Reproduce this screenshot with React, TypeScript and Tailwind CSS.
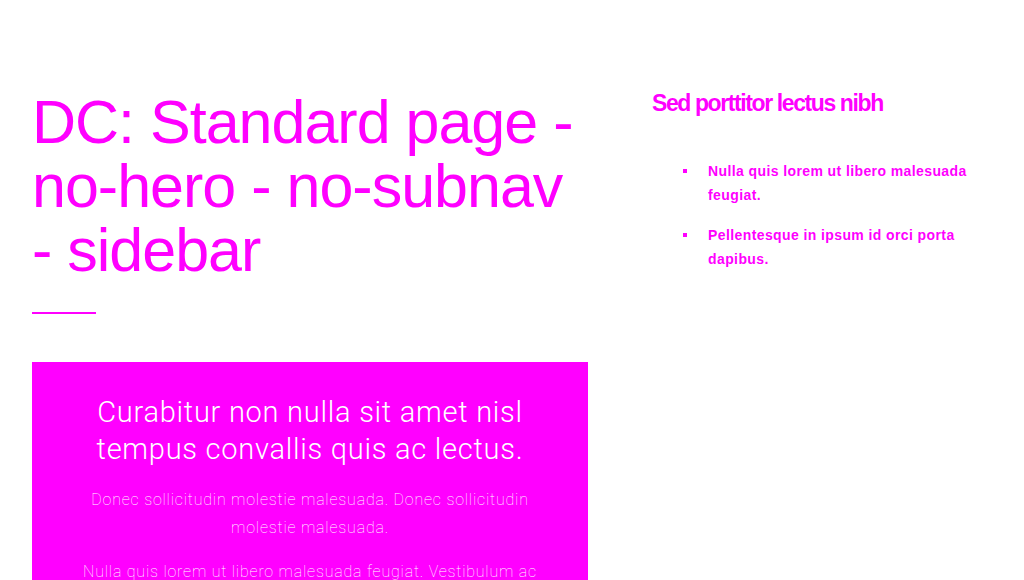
import React from "react";

const items = [
  "Nulla quis lorem ut libero malesuada feugiat.",
  "Pellentesque in ipsum id orci porta dapibus.",
];

export default function App(): React.ReactElement {
  return (
    <div className="min-h-[580px] bg-white px-8 pt-[90px] font-['Liberation_Sans',Arial,sans-serif] text-[#ff00ff]">
      <div className="flex gap-16">
        {/* Main column */}
        <main className="w-[556px] shrink-0">
          <h1 className="text-[61px] leading-[64px] tracking-[-1px]">
            DC: Standard page - no-hero - no-subnav - sidebar
          </h1>
          <div className="mt-[30px] h-[2px] w-16 bg-[#ff00ff]" />

          <section className="mt-[48px] bg-[#ff00ff] px-12 pt-8 pb-10 text-center text-white">
            <p className="font-['Roboto',sans-serif] text-[29px] font-light leading-[37px] tracking-[0.75px]">
              Curabitur non nulla sit amet nisl tempus convallis quis ac lectus.
            </p>
            <p className="mt-[18px] font-['Roboto',sans-serif] text-base font-thin leading-7 tracking-[0.8px]">
              Donec sollicitudin molestie malesuada. Donec sollicitudin molestie malesuada.
            </p>
            <p className="mt-4 font-['Roboto',sans-serif] text-base font-thin leading-7 tracking-[0.8px]">
              Nulla quis lorem ut libero malesuada feugiat. Vestibulum ac diam sit amet quam vehicula elementum sed sit amet dui.
            </p>
          </section>
        </main>

        {/* Sidebar */}
        <aside className="w-[340px] shrink-0 -mt-px">
          <h2 className="text-[23px] font-bold leading-7 tracking-[-1.4px]">
            Sed porttitor lectus nibh
          </h2>
          <ul className="mt-[42px] flex flex-col gap-4">
            {items.map((item) => (
              <li key={item} className="flex">
                <span className="ml-[31px] mt-[10px] h-1 w-1 shrink-0 bg-[#ff00ff]" />
                <span className="ml-[21px] text-sm font-bold leading-6 tracking-[0.4px]">
                  {item}
                </span>
              </li>
            ))}
          </ul>
        </aside>
      </div>
    </div>
  );
}
